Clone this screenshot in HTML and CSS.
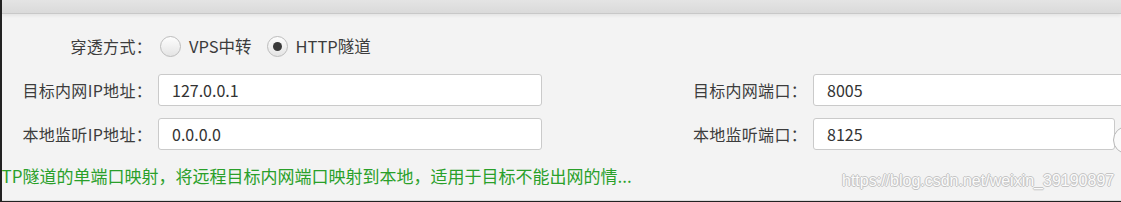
FILE: index.html
```html
<!DOCTYPE html>
<html lang="zh-CN">
<head>
    <meta charset="UTF-8">
    <title>穿透设置</title>
    <link rel="stylesheet" href="styles.css">
</head>
<body>
    <div class="window">
        <div class="toolbar"></div>
        <form class="tunnel-form">
            <div class="field-label">穿透方式：</div>
            <div class="radio-group">
                <label class="radio"><span class="radio-dot"></span>VPS中转</label>
                <label class="radio checked"><span class="radio-dot"></span>HTTP隧道</label>
            </div>

            <div class="field-label row2">目标内网IP地址：</div>
            <input class="text-input row2" type="text" value="127.0.0.1">
            <div class="field-label row2">目标内网端口：</div>
            <input class="text-input row2 wide" type="text" value="8005">

            <div class="field-label row3">本地监听IP地址：</div>
            <input class="text-input row3" type="text" value="0.0.0.0">
            <div class="field-label row3">本地监听端口：</div>
            <div class="input-with-knob row3">
                <input class="text-input" type="text" value="8125">
                <span class="knob"></span>
            </div>
        </form>
        <div class="hint">
            <span class="hint-text">HTTP隧道的单端口映射，将远程目标内网端口映射到本地，适用于目标不能出网的情...</span>
        </div>
        <div class="watermark">https://blog.csdn.net/weixin_39190897</div>
    </div>
</body>
</html>
```

FILE: styles.css
```css
/* Global styles */
html, body {
    margin: 0;
    height: 100%;
    overflow: hidden;
}

body {
    background: #222;
    font-family: "Noto Sans CJK SC", "Noto Sans", sans-serif;
    font-size: 16px;
    color: #3c3c3c;
}

.window {
    position: relative;
    margin-left: 2px;
    height: 200px;
    background: #f3f3f3;
    border-bottom: 1px solid #dcdcdc;
    overflow: hidden;
}

.toolbar {
    height: 13px;
    background: linear-gradient(#e4e4e4, #dadada);
    border-bottom: 1px solid #c8c8c8;
    box-shadow: 0 2px 3px rgba(0, 0, 0, 0.06);
}

/* Form grid */
.tunnel-form {
    display: grid;
    grid-template-columns: 150px 384px 259px 340px;
    grid-template-rows: 32px 32px 32px;
    column-gap: 6px;
    row-gap: 12px;
    padding-top: 16px;
}

.field-label {
    display: flex;
    align-items: center;
    justify-content: flex-end;
    white-space: nowrap;
    letter-spacing: 0.3px;
}

.radio-group {
    grid-column: 2 / 5;
    display: flex;
    align-items: center;
    gap: 15px;
    margin-left: 2px;
    font-size: 16.5px;
}

.radio {
    display: flex;
    align-items: center;
    gap: 8px;
}

.radio-dot {
    width: 21px;
    height: 21px;
    border: 1px solid #bcbcbc;
    border-radius: 50%;
    background: linear-gradient(#fdfdfd, #e4e4e4);
    box-sizing: border-box;
    display: flex;
    align-items: center;
    justify-content: center;
}

.radio.checked .radio-dot::after {
    content: '';
    width: 9px;
    height: 9px;
    border-radius: 50%;
    background: #3a3a3a;
}

.text-input {
    height: 32px;
    box-sizing: border-box;
    border: 1px solid #cacaca;
    border-radius: 3px;
    background: #fff;
    padding: 0 13px;
    font-family: inherit;
    font-size: 16px;
    color: #333;
    width: 100%;
    outline: none;
}

.text-input.wide {
    width: 360px;
}

.input-with-knob {
    display: flex;
    align-items: center;
}

.input-with-knob .text-input {
    width: 302px;
    flex: none;
}

.knob {
    flex: none;
    width: 26px;
    height: 26px;
    margin-top: 12px;
    margin-left: -2px;
    border: 1px solid #b8b8b8;
    border-radius: 50%;
    background: #fafafa;
}

.hint {
    overflow: hidden;
    white-space: nowrap;
    margin-top: 13px;
    color: #2aa02a;
    font-size: 17px;
}

.hint-text {
    display: inline-block;
    margin-left: -23px;
}

.watermark {
    position: absolute;
    left: 840px;
    top: 172px;
    font-family: "Liberation Sans", Arial, sans-serif;
    font-size: 16px;
    color: #fbfbfb;
    text-shadow: 1px 0 0 #c4c4c4, -1px 0 0 #c4c4c4, 0 1px 0 #c4c4c4, 0 -1px 0 #c4c4c4;
}
```
